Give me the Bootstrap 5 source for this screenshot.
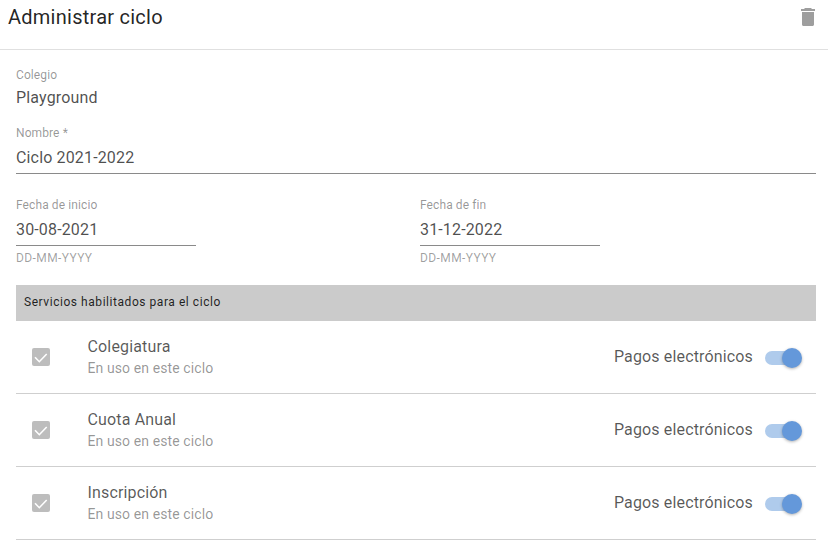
<!DOCTYPE html>
<html lang="es">
<head>
    <meta charset="UTF-8">
    <title>Administrar ciclo</title>
    <link href="https://cdn.jsdelivr.net/npm/bootstrap@5.3.0/dist/css/bootstrap.min.css" rel="stylesheet">
    <style>
    body {
      font-family: Roboto, "Liberation Sans", sans-serif;
      color: rgba(0, 0, 0, .87);
      background: #fff;
      overflow: hidden;
    }
    .panel-head {
      height: 50px;
      padding: 5px 13px 0 8px;
      border-bottom: 1px solid #e0e0e0;
    }
    .panel-title {
      font-size: 20px;
      line-height: 24px;
      letter-spacing: .25px;
      font-weight: 400;
      margin: 0;
      color: rgba(0, 0, 0, .87);
    }
    .trash-icon { margin-top: 3px; }
    .panel-body-wrap {
      padding: 0 12px 0 16px;
    }
    .field-label {
      font-size: 12px;
      line-height: 14px;
      letter-spacing: .1px;
      color: rgba(0, 0, 0, .42);
    }
    .field-value {
      font-size: 16px;
      line-height: 24px;
      letter-spacing: .15px;
      color: rgba(0, 0, 0, .7);
    }
    .field-line {
      border-bottom: 1px solid #8a8a8a;
      padding-bottom: 3px;
    }
    .field-help {
      font-size: 12px;
      line-height: 14px;
      letter-spacing: .4px;
      margin-top: 5px;
      color: rgba(0, 0, 0, .38);
    }
    .school-field { padding-top: 18px; }
    .school-field .field-value { margin-top: 4px; }
    .name-field { padding-top: 16px; }
    .name-field .field-line, .date-box .field-line { margin-top: 6px; }
    .dates-row { padding-top: 24px; }
    .date-col { flex: 0 0 404px; }
    .date-box { width: 180px; }
    .services-head {
      margin-top: 20px;
      height: 36px;
      line-height: 34px;
      padding-left: 8px;
      background: #cbcbcb;
      font-size: 12px;
      letter-spacing: .55px;
      color: rgba(0, 0, 0, .85);
    }
    .service-row {
      height: 73px;
      border-bottom: 1px solid #cfcfcf;
    }
    .check-cell { width: 71.500px; padding-left: 16px; }
    .check-box {
      width: 18px;
      height: 18px;
      background: #bdbdbd;
      border-radius: 2px;
      display: block;
    }
    .service-name {
      font-size: 16px;
      line-height: 21px;
      letter-spacing: .15px;
      color: rgba(0, 0, 0, .66);
    }
    .service-note {
      font-size: 14px;
      line-height: 21px;
      letter-spacing: .1px;
      margin-top: 1px;
      color: rgba(0, 0, 0, .42);
    }
    .pay-label {
      font-size: 16px;
      letter-spacing: .15px;
      color: rgba(0, 0, 0, .66);
      margin-right: 12px;
    }
    .switch-wrap {
      position: relative;
      width: 34px;
      height: 14px;
      margin-right: 17px;
      margin-top: 1px;
      border-radius: 7px;
      background: #afcbec;
    }
    .switch-knob {
      position: absolute;
      top: -3px;
      right: -3px;
      width: 20px;
      height: 20px;
      border-radius: 50%;
      background: #6498da;
      box-shadow: 0 1px 3px rgba(0, 0, 0, .3);
    }
    </style>
</head>
<body>
    <div class="panel-head d-flex justify-content-between align-items-start">
        <h1 class="panel-title">Administrar ciclo</h1>
        <svg class="trash-icon" width="14" height="18" viewBox="0 0 14 18" aria-hidden="true">
            <path fill="#9e9e9e" d="M4 0h6l1 1h3v2H0V1h3zM1 4h12v12.500c0 .8-.7 1.500-1.500 1.500h-9C1.700 18 1 17.300 1 16.500z"/>
        </svg>
    </div>

    <div class="panel-body-wrap">
        <div class="school-field">
            <div class="field-label">Colegio</div>
            <div class="field-value">Playground</div>
        </div>
        <div class="name-field">
            <div class="field-label">Nombre *</div>
            <div class="field-value field-line">Ciclo 2021-2022</div>
        </div>
        <div class="dates-row d-flex">
            <div class="date-col">
                <div class="date-box">
                    <div class="field-label">Fecha de inicio</div>
                    <div class="field-value field-line">30-08-2021</div>
                    <div class="field-help">DD-MM-YYYY</div>
                </div>
            </div>
            <div class="date-col">
                <div class="date-box">
                    <div class="field-label">Fecha de fin</div>
                    <div class="field-value field-line">31-12-2022</div>
                    <div class="field-help">DD-MM-YYYY</div>
                </div>
            </div>
        </div>

        <div class="services-head">Servicios habilitados para el ciclo</div>
        <div id="servicios"></div>
    </div>

<script>
const servicios = ["Colegiatura", "Cuota Anual", "Inscripción"];

document.getElementById("servicios").innerHTML = servicios.map(nombre => `
    <div class="service-row d-flex align-items-center">
        <div class="check-cell">
            <svg class="check-box" viewBox="0 0 18 18" aria-hidden="true">
                <path d="M3 9.300l4.300 4.400L14.700 6" fill="none" stroke="#fff" stroke-width="1.600"/>
            </svg>
        </div>
        <div class="flex-grow-1">
            <div class="service-name">${nombre}</div>
            <div class="service-note">En uso en este ciclo</div>
        </div>
        <div class="pay-label">Pagos electrónicos</div>
        <div class="switch-wrap"><span class="switch-knob"></span></div>
    </div>
`).join("");
</script>
<script src="https://cdn.jsdelivr.net/npm/bootstrap@5.3.0/dist/js/bootstrap.bundle.min.js"></script>
</body>
</html>
